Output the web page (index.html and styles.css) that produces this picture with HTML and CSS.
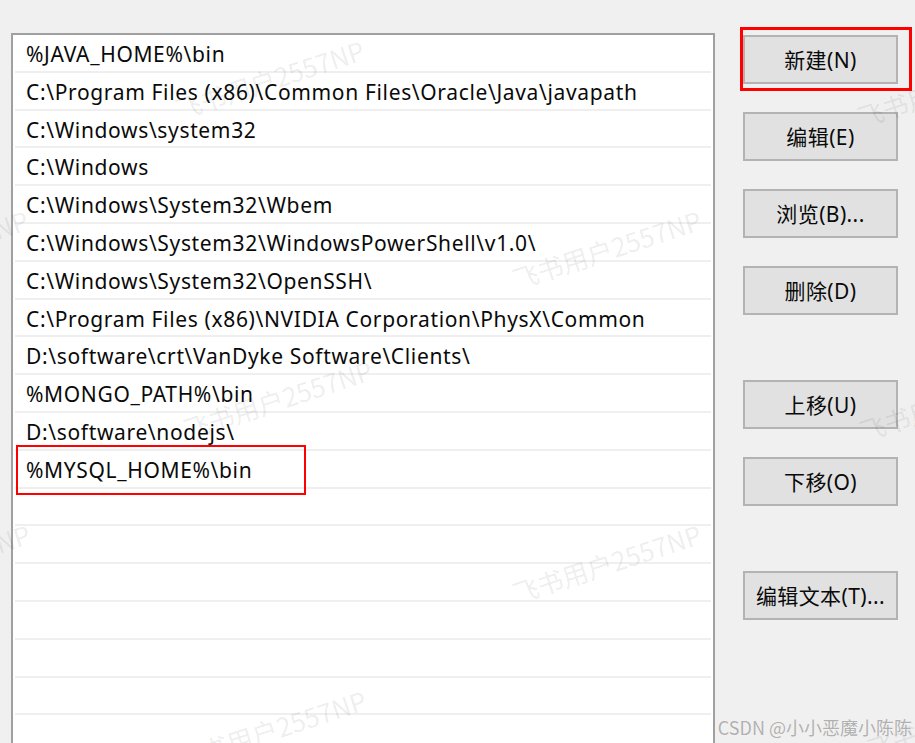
FILE: index.html
```html
<!DOCTYPE html>
<html lang="zh-CN">
<head>
<meta charset="utf-8">
<title>编辑环境变量</title>
<link rel="stylesheet" href="styles.css">
</head>
<body>
<div class="dialog">
  <div class="path-list">
    <div class="row">%JAVA_HOME%\bin</div>
    <div class="row">C:\Program Files (x86)\Common Files\Oracle\Java\javapath</div>
    <div class="row">C:\Windows\system32</div>
    <div class="row">C:\Windows</div>
    <div class="row">C:\Windows\System32\Wbem</div>
    <div class="row">C:\Windows\System32\WindowsPowerShell\v1.0\</div>
    <div class="row">C:\Windows\System32\OpenSSH\</div>
    <div class="row">C:\Program Files (x86)\NVIDIA Corporation\PhysX\Common</div>
    <div class="row">D:\software\crt\VanDyke Software\Clients\</div>
    <div class="row">%MONGO_PATH%\bin</div>
    <div class="row">D:\software\nodejs\</div>
    <div class="row marked">%MYSQL_HOME%\bin</div>
    <div class="row"></div>
    <div class="row"></div>
    <div class="row"></div>
    <div class="row"></div>
    <div class="row"></div>
    <div class="row"></div>
    <div class="row"></div>
  </div>
  <div class="actions">
    <button class="btn marked-btn">新建(N)</button>
    <button class="btn">编辑(E)</button>
    <button class="btn">浏览(B)...</button>
    <button class="btn">删除(D)</button>
    <button class="btn sep">上移(U)</button>
    <button class="btn">下移(O)</button>
    <button class="btn sep">编辑文本(T)...</button>
  </div>
</div>
<div class="watermarks">
  <span class="wm wm-a">飞书用户2557NP</span>
  <span class="wm wm-b">飞书用户2557NP</span>
  <span class="wm wm-c">飞书用户2557NP</span>
  <span class="wm wm-d">飞书用户2557NP</span>
  <span class="wm wm-e">飞书用户2557NP</span>
  <span class="wm wm-f">飞书用户2557NP</span>
  <span class="wm wm-g">飞书用户2557NP</span>
  <span class="wm wm-h">飞书用户2557NP</span>
  <span class="wm wm-i">飞书用户2557NP</span>
  <span class="wm wm-j">飞书用户2557NP</span>
</div>
<div class="credit">CSDN @小小恶魔小陈陈</div>
</body>
</html>
```
FILE: styles.css
```css
html, body {
  margin: 0;
  padding: 0;
  height: 100%;
  overflow: hidden;
}
body {
  background: #f0f0f0;
  font-family: "Noto Sans", "Noto Sans CJK SC", sans-serif;
  color: #0a0a0a;
  position: relative;
}
.dialog {
  display: flex;
  align-items: flex-start;
  padding: 33px 0 0 11px;
}
.path-list {
  width: 700px;
  height: 740px;
  background: #fff;
  border: 2px solid #a0a0a0;
  border-bottom: none;
  flex: none;
}
.row {
  position: relative;
  box-sizing: border-box;
  height: 37.8px;
  margin: 0 2px;
  padding: 2px 0 0 11px;
  border-bottom: 2px solid #efefef;
  font-size: 21px;
  letter-spacing: 0.65px;
  line-height: 35px;
  white-space: nowrap;
}
.row.marked::after {
  content: "";
  position: absolute;
  left: 1px;
  top: -6px;
  width: 286px;
  height: 46px;
  border: 2.5px solid #f00;
}
.actions {
  display: flex;
  flex-direction: column;
  margin-left: 28px;
  padding-top: 2px;
  gap: 28px;
}
.btn {
  position: relative;
  width: 155px;
  height: 49px;
  box-sizing: border-box;
  background: #e1e1e1;
  border: 2px solid #b3b3b3;
  font-family: "Noto Sans", "Noto Sans CJK SC", sans-serif;
  font-size: 21px;
  letter-spacing: 0.4px;
  color: #0a0a0a;
  padding: 0 0 2px;
}
.btn.sep {
  margin-top: 37px;
}
.btn.marked-btn::after {
  content: "";
  position: absolute;
  left: -5px;
  top: -10px;
  right: -16px;
  bottom: -9px;
  border: 3px solid #f00;
}
.watermarks {
  position: absolute;
  inset: 0;
  pointer-events: none;
}
.wm {
  position: absolute;
  font-family: "Noto Sans CJK SC", sans-serif;
  font-size: 26px;
  line-height: 26px;
  color: rgba(0, 0, 0, 0.085);
  white-space: nowrap;
  transform: rotate(-18deg);
  transform-origin: 0 100%;
}
.wm-a { left: 180px; top: 96px; }
.wm-b { left: 517px; top: 266px; }
.wm-c { left: 862px; top: 104px; }
.wm-d { left: -156px; top: 266px; }
.wm-e { left: 188px; top: 416px; }
.wm-f { left: 517px; top: 580px; }
.wm-g { left: 864px; top: 418px; }
.wm-h { left: -154px; top: 580px; }
.wm-i { left: 182px; top: 746px; }
.wm-j { left: 872px; top: 736px; }
.credit {
  position: absolute;
  right: 3px;
  bottom: 5px;
  font-family: "Noto Sans CJK SC", sans-serif;
  font-size: 18px;
  line-height: 22px;
  color: #b0b0b0;
  text-shadow: 0 0 1px #fff;
}
```
